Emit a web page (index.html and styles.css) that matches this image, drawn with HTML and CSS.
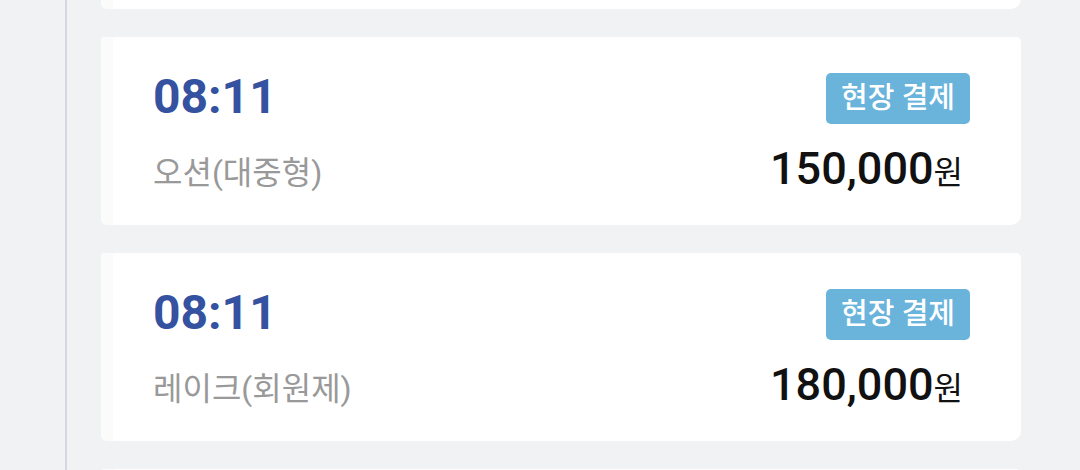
FILE: index.html
```html
<!DOCTYPE html>
<html lang="ko">
<head>
<meta charset="utf-8">
<link rel="stylesheet" href="styles.css">
</head>
<body>
<div class="page">
  <div class="rail"><div class="line"></div></div>
  <div class="list">
    <div class="card placeholder"></div>
    <div class="card">
      <div class="row top">
        <div class="time">08:11</div>
        <div class="badge">현장 결제</div>
      </div>
      <div class="row bottom">
        <div class="name">오션(대중형)</div>
        <div class="price"><span class="num">150,000</span><span class="won">원</span></div>
      </div>
    </div>
    <div class="card">
      <div class="row top">
        <div class="time">08:11</div>
        <div class="badge">현장 결제</div>
      </div>
      <div class="row bottom">
        <div class="name">레이크(회원제)</div>
        <div class="price"><span class="num">180,000</span><span class="won">원</span></div>
      </div>
    </div>
    <div class="card placeholder"></div>
  </div>
</div>
</body>
</html>
```
FILE: styles.css
```css
html, body {
  margin: 0;
  padding: 0;
  background: #f1f2f4;
  overflow: hidden;
}
body {
  font-family: Roboto, "Noto Sans CJK KR", sans-serif;
}
.page {
  display: flex;
  height: 470px;
  overflow: hidden;
}
.rail {
  width: 65px;
  flex: none;
  display: flex;
  justify-content: flex-end;
}
.line {
  width: 2px;
  background: #d3d8e2;
  height: 100%;
  margin-right: -2px;
}
.list {
  margin-left: 36px;
  margin-top: -179px;
  width: 920px;
  display: flex;
  flex-direction: column;
  gap: 28px;
}
.card {
  height: 188px;
  box-sizing: border-box;
  background: #ffffff;
  border-left: 12px solid #fbfbfc;
  border-radius: 2px 5px 10px 6px;
  padding: 35px 51px 0 40px;
  display: flex;
  flex-direction: column;
  flex: none;
}
.row {
  display: flex;
  justify-content: space-between;
  align-items: flex-start;
}
.time {
  font-size: 48px;
  font-weight: 700;
  line-height: 1;
  color: #3452a0;
  padding-top: 1px;
}
.badge {
  background: #6ab4dc;
  color: #ffffff;
  font-size: 29px;
  font-weight: 500;
  line-height: 51px;
  height: 51px;
  padding: 0 15px;
  border-radius: 5px;
  margin-top: 1px;
}
.row.bottom {
  margin-top: 22px;
  align-items: baseline;
}
.name {
  font-size: 32px;
  color: #999999;
  line-height: 1;
}
.price {
  color: #111111;
  line-height: 1;
  margin-right: 7px;
}
.num {
  font-size: 45px;
  font-weight: 500;
}
.won {
  font-size: 32px;
}
```
